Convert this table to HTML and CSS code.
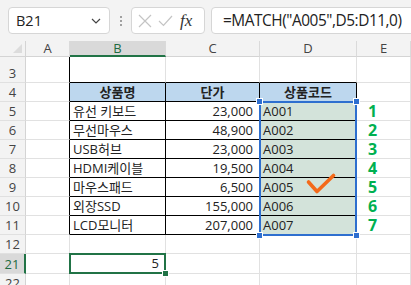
FILE: index.html
```html
<!DOCTYPE html>
<html lang="ko">
<head>
<meta charset="utf-8">
<link rel="stylesheet" href="styles.css">
</head>
<body>
<div class="app">
  <div class="topbar">
    <div class="namebox">
      <span class="nb-text">B21</span>
      <svg class="chev" width="10" height="6" viewBox="0 0 10 6"><path d="M1 1 L5 5 L9 1" fill="none" stroke="#444" stroke-width="1.2"/></svg>
    </div>
    <div class="dots"><i></i><i></i><i></i></div>
    <div class="fxbox">
      <svg width="14" height="14" viewBox="0 0 14 14"><path d="M1 1 L13 13 M13 1 L1 13" stroke="#c4c4c4" stroke-width="1.2"/></svg>
      <svg width="15" height="12" viewBox="0 0 15 12"><path d="M1 6 L5.5 10.5 L14 1" fill="none" stroke="#c4c4c4" stroke-width="1.2"/></svg>
      <span class="fx">fx</span>
    </div>
    <div class="formula">=MATCH("A005",D5:D11,0)</div>
  </div>

  <div class="sheet-wrap">
  <div class="sheet">
    <div class="corner"><span class="tri"></span></div>
    <div class="ch">A</div>
    <div class="ch sel">B</div>
    <div class="ch">C</div>
    <div class="ch">D</div>
    <div class="ch">E</div>

    <div class="rh">3</div>
    <div class="c tb-r"></div><div class="c tb-b"></div><div class="c tb-b"></div><div class="c tb-b"></div><div class="c"></div>

    <div class="rh">4</div>
    <div class="c tb-r"></div>
    <div class="c t hd">상품명</div>
    <div class="c t hd">단가</div>
    <div class="c t hd">상품코드</div>
    <div class="c"></div>

    <div class="rh">5</div>
    <div class="c tb-r"></div>
    <div class="c t">유선 키보드</div>
    <div class="c t num">23,000</div>
    <div class="c t code">A001</div>
    <div class="c idx">1</div>

    <div class="rh">6</div>
    <div class="c tb-r"></div>
    <div class="c t">무선마우스</div>
    <div class="c t num">48,900</div>
    <div class="c t code">A002</div>
    <div class="c idx">2</div>

    <div class="rh">7</div>
    <div class="c tb-r"></div>
    <div class="c t">USB허브</div>
    <div class="c t num">23,000</div>
    <div class="c t code">A003</div>
    <div class="c idx">3</div>

    <div class="rh">8</div>
    <div class="c tb-r"></div>
    <div class="c t">HDMI케이블</div>
    <div class="c t num">19,500</div>
    <div class="c t code">A004</div>
    <div class="c idx">4</div>

    <div class="rh">9</div>
    <div class="c tb-r"></div>
    <div class="c t">마우스패드</div>
    <div class="c t num">6,500</div>
    <div class="c t code">A005</div>
    <div class="c idx">5</div>

    <div class="rh">10</div>
    <div class="c tb-r"></div>
    <div class="c t">외장SSD</div>
    <div class="c t num">155,000</div>
    <div class="c t code">A006</div>
    <div class="c idx">6</div>

    <div class="rh">11</div>
    <div class="c tb-r"></div>
    <div class="c t">LCD모니터</div>
    <div class="c t num">207,000</div>
    <div class="c t code">A007</div>
    <div class="c idx">7</div>

    <div class="rh">12</div>
    <div class="c"></div><div class="c"></div><div class="c"></div><div class="c"></div><div class="c"></div>

    <div class="rh act">21</div>
    <div class="c"></div>
    <div class="c num">5</div>
    <div class="c"></div><div class="c"></div><div class="c"></div>

    <div class="rh">22</div>
    <div class="c"></div><div class="c"></div><div class="c"></div><div class="c"></div><div class="c"></div>
  </div>

  <div class="overlay">
    <div class="selbox">
      <span class="h tl"></span><span class="h tr"></span><span class="h bl"></span><span class="h br"></span>
    </div>
    <div class="checkcell">
      <svg class="check" width="32" height="23" viewBox="0 0 32 23"><path d="M3.5 10 L12 19.5 L28.5 3.5" fill="none" stroke="#f46a1a" stroke-width="3.6" stroke-linecap="round" stroke-linejoin="round"/></svg>
    </div>
    <div class="activebox"><span class="fill"></span></div>
  </div>
  </div>
</div>
</body>
</html>
```

FILE: styles.css
```css
* { box-sizing: border-box; }
html, body { margin: 0; padding: 0; }
body {
  width: 411px;
  height: 285px;
  overflow: hidden;
  background: #fff;
  font-family: "Open Sans", "Noto Sans CJK KR", sans-serif;
  color: #222;
}
.app { width: 411px; height: 285px; overflow: hidden; }

.topbar {
  height: 41px;
  background: #f3f3f3;
  display: flex;
  align-items: center;
  padding: 0 0 0 8px;
}
.topbar > * { flex: none; }
.namebox {
  width: 102px;
  height: 27px;
  background: #fff;
  border: 1px solid #d6d6d6;
  border-radius: 4px;
  display: flex;
  align-items: center;
  justify-content: space-between;
  padding: 0 8px 0 7px;
}
.nb-text { font-size: 14.5px; color: #222; }
.dots {
  width: 21px;
  display: flex;
  flex-direction: column;
  align-items: center;
  gap: 2px;
}
.dots i { width: 2px; height: 2px; background: #a0a0a0; display: block; }
.fxbox {
  width: 74px;
  height: 27px;
  background: #fff;
  border: 1px solid #d6d6d6;
  border-radius: 4px;
  display: flex;
  align-items: center;
  gap: 6px;
  padding-left: 6px;
}
.fx {
  font-family: "Liberation Serif", serif;
  font-style: italic;
  font-size: 17px;
  color: #333;
  margin-left: 1px;
}
.formula {
  margin-left: 6px;
  width: 230px;
  height: 27px;
  background: #fff;
  border: 1px solid #d6d6d6;
  border-radius: 4px;
  font-size: 15.4px;
  line-height: 25px;
  padding-left: 11px;
  white-space: nowrap;
  color: #222;
  letter-spacing: -0.45px;
}

.sheet-wrap { position: relative; }
.sheet, .overlay {
  display: grid;
  grid-template-columns: 26px 44px 96px 94px 97px 54px;
  grid-template-rows: 16px 26px repeat(8, 19px) 19px 20px 19px;
}
.sheet { font-size: 13px; }
.overlay {
  position: absolute;
  left: 0; top: 0; right: 0; bottom: 0;
  pointer-events: none;
}
.corner {
  background: #f3f3f3;
  border-right: 1px solid #d4d4d4;
  border-bottom: 1px solid #d4d4d4;
  position: relative;
}
.tri {
  position: absolute;
  right: 3px;
  bottom: 3px;
  width: 0; height: 0;
  border-left: 9px solid transparent;
  border-bottom: 9px solid #dcdcdc;
}
.ch {
  background: #f3f3f3;
  border-right: 1px solid #dadada;
  border-bottom: 1px solid #d4d4d4;
  text-align: center;
  font-size: 13px;
  line-height: 15px;
  color: #444;
}
.ch.sel {
  background: #d9d9d9;
  color: #1e6b41;
  border-bottom: 2px solid #217346;
}
.rh {
  background: #f3f3f3;
  border-right: 1px solid #d4d4d4;
  border-bottom: 1px solid #e0e0e0;
  font-size: 13px;
  color: #444;
  display: flex;
  align-items: flex-end;
  justify-content: center;
  padding-bottom: 1px;
  line-height: 16px;
}
.rh.act {
  background: #d9d9d9;
  color: #1e6b41;
  border-right: 2px solid #217346;
}
.c {
  border-right: 1px solid #e1e1e1;
  border-bottom: 1px solid #e1e1e1;
  white-space: nowrap;
  line-height: 18px;
  padding: 0 3px;
}
.tb-r { border-right-color: #000; }
.tb-b { border-bottom-color: #000; }
.t { border-right-color: #000; border-bottom-color: #000; }
.hd {
  background: #bdd7ee;
  font-weight: bold;
  text-align: center;
}
.num { text-align: right; padding-right: 6px; }
.code { background: #d3e3da; }
.idx {
  color: #00b050;
  font-weight: bold;
  font-size: 16px;
  line-height: 18px;
  padding-left: 11px;
}

.selbox {
  grid-column: 5;
  grid-row: 4 / 11;
  margin: -1px 0 -1px -1px;
  border: 2px solid #2e6fcf;
  position: relative;
}
.h {
  position: absolute;
  width: 7px; height: 7px;
  background: #2e6fcf;
  border: 1px solid #fff;
}
.tl { left: -5px; top: -5px; }
.tr { right: -5px; top: -5px; }
.bl { left: -5px; bottom: -5px; }
.br { right: -5px; bottom: -5px; }

.checkcell {
  grid-column: 5;
  grid-row: 8;
  position: relative;
}
.check {
  position: absolute;
  left: 45px;
  top: -6px;
}
.activebox {
  grid-column: 3;
  grid-row: 12;
  margin: -1px 0 0 -1px;
  border: 2px solid #217346;
  position: relative;
}
.fill {
  position: absolute;
  right: -5px; bottom: -5px;
  width: 7px; height: 7px;
  background: #217346;
  border: 1px solid #fff;
}
```
